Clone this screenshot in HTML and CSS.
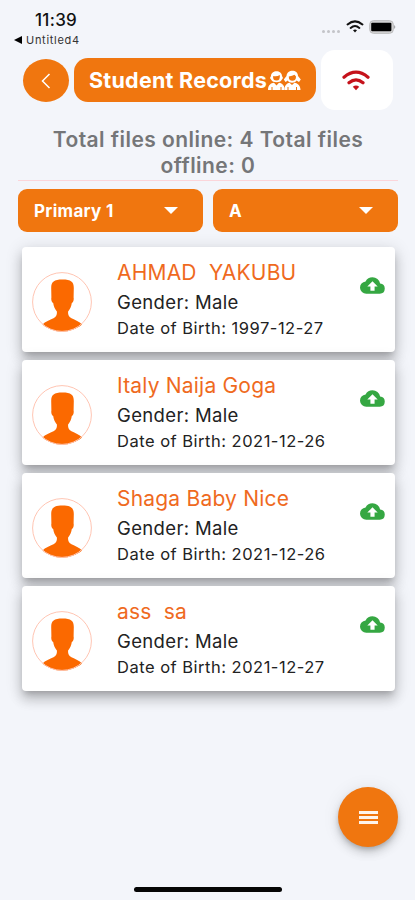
FILE: index.html
```html
<!DOCTYPE html>
<html lang="en">
<head>
  <meta charset="UTF-8" />
  <meta name="viewport" content="width=device-width, initial-scale=1.0" />
  <title>Student Records</title>
  <link rel="stylesheet" href="styles.css">
</head>
<body>
  <!-- shared icons -->
  <svg class="icon-defs" width="0" height="0">
    <symbol id="wifi" viewBox="0 0 28 21">
      <path d="M2 7.2 Q14 -2.8 26 7.2 M7 12.8 Q14 6.8 21 12.8" fill="none" stroke="currentColor" stroke-width="3.2" stroke-linecap="round" />
      <path d="M10.8 16.7 Q14 14.2 17.2 16.7 L14 20.2Z" fill="currentColor" />
    </symbol>
    <symbol id="avatar" viewBox="0 0 60 60">
      <path d="M10.5 52.5 C13 49.5 18 48 21.5 46.2 C25 44.5 25 42 24.9 39.5 C22.8 37 21.6 34 21.2 31 C19.8 30.5 18.9 27.5 19.4 25.5 L19.2 16 C19.2 10 22 7.6 30.5 7.6 C39 7.6 41.8 10 41.8 16 L41.6 25.5 C42.1 27.5 41.2 30.5 39.8 31 C39.4 34 38.2 37 36.1 39.5 C36 42 36 44.5 39.5 46.2 C43 48 47.5 49.5 50 52.5 C39 62 21.5 62 10.5 52.5Z" fill="#fb6900" />
      <circle cx="30" cy="30" r="29.4" fill="none" stroke="#ffc5b3" stroke-width="1" />
    </symbol>
    <symbol id="cloud" viewBox="0 0 24 16">
      <path d="M19.35 6.04A7.49 7.49 0 0 0 12 0 7.5 7.5 0 0 0 5.35 4.04 6 6 0 0 0 6 16h13a5 5 0 0 0 .35-9.96zM14 9v4h-4V9H7l5-5 5 5h-3z" fill="#35a742" />
    </symbol>
  </svg>

  <div class="status">
    <div class="status-left">
      <div class="time">11:39</div>
      <div class="back-app"><span class="back-arrow"></span>Untitled4</div>
    </div>
    <div class="status-right">
      <div class="signal"><i></i><i></i><i></i><i></i></div>
      <svg class="status-wifi"><use href="#wifi" /></svg>
      <svg class="battery" viewBox="0 0 27 14">
        <rect x=".7" y=".7" width="23.6" height="12.6" rx="3.7" fill="#d6d6d7" stroke="#b9b9ba" />
        <rect x="2.2" y="2.8" width="20.2" height="8.4" rx="1" fill="#000" />
        <path d="M25.3 5 Q27.2 7 25.3 9Z" fill="#88888a" />
      </svg>
    </div>
  </div>

  <header>
    <button class="back" aria-label="Back">
      <svg width="10" height="16" viewBox="0 0 10 16"><path d="M8.5 1 L1.5 8 L8.5 15" fill="none" stroke="#fff" stroke-width="1.5" /></svg>
    </button>
    <h1>Student Records<svg class="students" viewBox="0 0 34 21">
      <g fill="#fff">
        <path d="M4 6 C4 -.5 15 -.5 15 6 L16 8 L14.6 10 C13.5 13 5.5 13 4.4 10 L3 8Z" />
        <path d="M1 20 C1 15 4 13 7 12.7 L9.5 15.5 L12 12.7 C15 13 17 15 17.5 18 L17.5 20Z" />
        <path d="M19.5 6 C20 -1 31 -1 31 6 L33.8 9.5 L32 12 L29.5 10.5 C28 13.5 22 13.5 20.8 10.5 L18.5 12 L16.8 9.5Z" />
        <path d="M17.5 18 C18 15 20 13 22.5 12.7 L25 15 L27.5 12.7 C31 13 33.5 16 33.5 20 L17.5 20Z" />
      </g>
      <g fill="#f0760f">
        <path d="M6.2 6 Q10 6.8 12.8 5 Q13.5 10.5 9.5 10.5 Q5.5 10.5 6.2 6Z" />
        <path d="M21.8 6.5 Q25.5 6 27.5 4.8 L29 6.5 Q29 10.8 25.4 10.8 Q21.7 10.8 21.8 6.5Z" />
        <path d="M4.5 17 L5.5 17 L5.5 20 L4.5 20Z M13.5 17 L14.5 17 L14.5 20 L13.5 20Z M20.5 17 L21.5 17 L21.5 20 L20.5 20Z M29 17 L30 17 L30 20 L29 20Z" />
      </g>
    </svg></h1>
    <div class="network"><svg><use href="#wifi" /></svg></div>
  </header>

  <main>
    <p class="totals">Total files online: 4 Total files<br>offline: 0</p>

    <div class="filters">
      <button class="select">Primary 1<span class="caret"></span></button>
      <button class="select">A<span class="caret"></span></button>
    </div>

    <section class="records">
      <article class="card">
        <svg class="avatar"><use href="#avatar" /></svg>
        <div class="info">
          <h2>AHMAD&nbsp; YAKUBU</h2>
          <p class="gender">Gender: Male</p>
          <p class="dob">Date of Birth: 1997-12-27</p>
        </div>
        <svg class="cloud"><use href="#cloud" /></svg>
      </article>
      <article class="card">
        <svg class="avatar"><use href="#avatar" /></svg>
        <div class="info">
          <h2>Italy Naija Goga</h2>
          <p class="gender">Gender: Male</p>
          <p class="dob">Date of Birth: 2021-12-26</p>
        </div>
        <svg class="cloud"><use href="#cloud" /></svg>
      </article>
      <article class="card">
        <svg class="avatar"><use href="#avatar" /></svg>
        <div class="info">
          <h2>Shaga Baby Nice</h2>
          <p class="gender">Gender: Male</p>
          <p class="dob">Date of Birth: 2021-12-26</p>
        </div>
        <svg class="cloud"><use href="#cloud" /></svg>
      </article>
      <article class="card">
        <svg class="avatar"><use href="#avatar" /></svg>
        <div class="info">
          <h2>ass&nbsp; sa</h2>
          <p class="gender">Gender: Male</p>
          <p class="dob">Date of Birth: 2021-12-27</p>
        </div>
        <svg class="cloud"><use href="#cloud" /></svg>
      </article>
    </section>
  </main>

  <button class="fab" aria-label="Menu"><i></i><i></i><i></i></button>
  <div class="home-bar"></div>
</body>
</html>
```
FILE: styles.css
```css
* { box-sizing: border-box; }
body { font-family: Inter, "Liberation Sans", sans-serif; margin: 0; height: 900px; background: #f3f5fa; color: #222; position: relative; overflow: hidden; }
h1, h2, p { margin: 0; }
button { border: 0; padding: 0; font-family: inherit; color: white; background: #f0760f; }
svg { display: block; flex: none; }
.icon-defs { position: absolute; }

.status { height: 50px; display: flex; justify-content: space-between; padding: 10px 19px 0 14px; }
.time { font-size: 17px; line-height: 20px; font-weight: 500; letter-spacing: 0.3px; padding-left: 21px; color: #111; }
.back-app { display: flex; align-items: center; gap: 4px; font-size: 11px; line-height: 20px; letter-spacing: 0.7px; color: #333; }
.back-arrow { border: 4px solid transparent; border-right: 8px solid #000; border-left: 0; }
.status-right { display: flex; align-items: center; height: 33px; }
.signal { display: flex; gap: 2px; padding-top: 9px; margin-right: 6px; }
.signal i { width: 3px; height: 3px; border-radius: 50%; background: #c3c4c8; }
.status-wifi { width: 18px; height: 13px; color: #111; margin-right: 5px; }
.battery { width: 27px; height: 14px; }

header { display: flex; align-items: center; height: 60px; padding-left: 23px; }
.back { width: 46px; height: 43px; border-radius: 50%; display: flex; align-items: center; justify-content: center; margin: 1px 5px 0 0; }
h1 { display: flex; align-items: center; width: 241.5px; height: 44px; padding-left: 15px; border-radius: 14px; background: #f0760f; color: white; font-size: 21.5px; font-weight: 700; letter-spacing: 0.25px; white-space: nowrap; }
.students { width: 34px; height: 21px; }
.network { width: 72.5px; height: 60px; margin-left: 5px; border-radius: 14px; background: white; display: flex; align-items: center; justify-content: center; color: #c5121b; }
.network svg { width: 28px; height: 21px; margin-right: 1px; }

main { padding: 0 17px 0 18px; }
.totals { height: 71px; padding-top: 17px; border-bottom: 1px solid #fbd5da; text-align: center; font-size: 21px; line-height: 26px; font-weight: 600; letter-spacing: 0.45px; color: #757678; }
.filters { display: grid; grid-template-columns: 1fr 1fr; gap: 10px; margin-top: 8px; }
.select { display: flex; align-items: center; justify-content: space-between; height: 43px; padding: 0 25px 0 16px; border-radius: 9px; font-size: 17px; font-weight: 700; letter-spacing: 0.3px; }
.caret { border: 7px solid transparent; border-top: 7px solid white; border-bottom: 0; }

.records { display: flex; flex-direction: column; gap: 8px; padding: 15px 3.5px 0; }
.card { display: flex; height: 105px; border-radius: 4px; background: white; padding: 0 10px 0 10.5px; box-shadow: 0 5px 6px -3px rgba(0,0,0,.2), 0 9px 12px 1px rgba(0,0,0,.14), 0 3px 16px 2px rgba(0,0,0,.12); }
.avatar { width: 60px; height: 60px; margin-top: 25px; }
.info { flex: 1; padding: 12px 0 0 25px; white-space: nowrap; }
h2 { font-size: 21px; line-height: 28px; font-weight: 400; letter-spacing: 0.2px; color: #ef6a1e; }
.gender { font-size: 18.5px; line-height: 31px; letter-spacing: 0.35px; }
.dob { font-size: 16.5px; line-height: 21px; letter-spacing: 0.5px; }
.cloud { width: 25px; height: 17px; margin-top: 30px; }

/* floating controls */
.fab { position: absolute; right: 17px; top: 787px; width: 60px; height: 60px; border-radius: 50%; display: flex; flex-direction: column; align-items: center; justify-content: center; gap: 2px; box-shadow: 0 3px 5px -1px rgba(0,0,0,.2), 0 6px 10px rgba(0,0,0,.14), 0 1px 18px rgba(0,0,0,.08); }
.fab i { width: 19px; height: 3px; background: white; opacity: .92; }
.home-bar { position: absolute; left: 134px; bottom: 8px; width: 148px; height: 5px; border-radius: 3px; background: #050505; }
```
